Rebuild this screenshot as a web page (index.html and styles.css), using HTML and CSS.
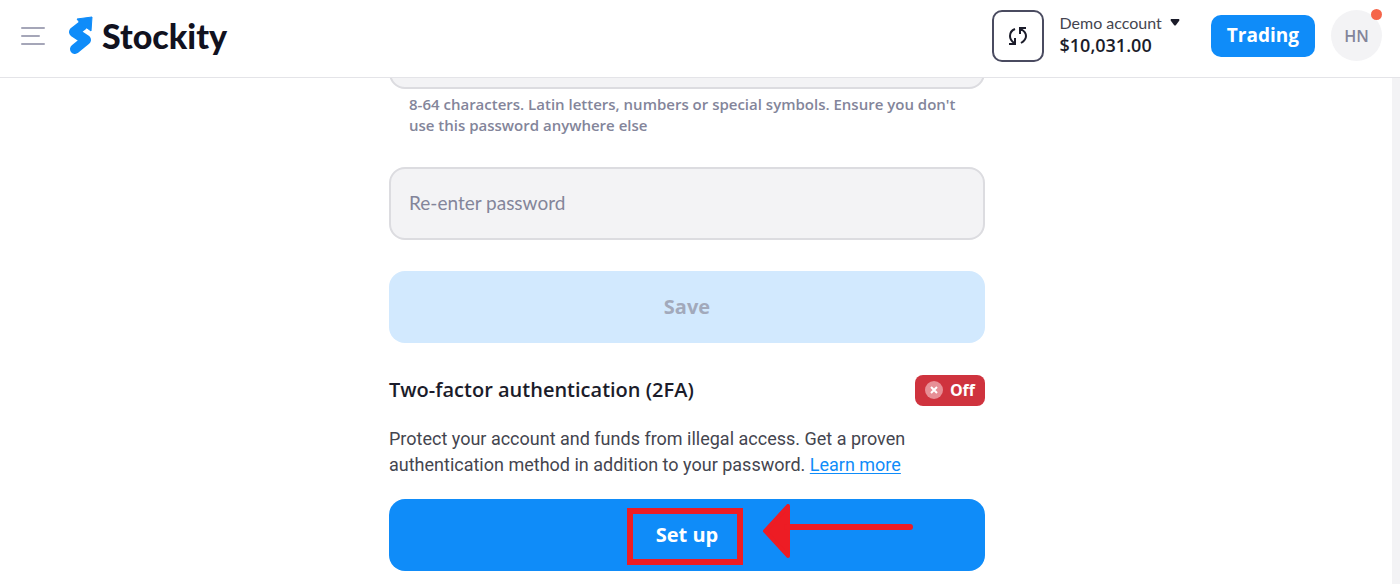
FILE: index.html
```html
<!DOCTYPE html>
<html lang="en">
<head>
	<meta charset="UTF-8">
	<meta name="viewport" content="width=device-width, initial-scale=1">
	<title>Stockity</title>
	<link rel="stylesheet" href="styles.css">
</head>
<body>
	<header class="header">
		<button class="menu" type="button" aria-label="Menu">
			<svg width="24" height="20" viewBox="0 0 24 20" fill="none" stroke="#a5a6b8" stroke-width="2" stroke-linecap="round">
				<path d="M1 2h22M1 10h17M1 18h22"/>
			</svg>
		</button>
		<a class="logo" href="#">
			<svg width="24" height="40" viewBox="0 0 24 40" aria-hidden="true">
				<path d="M6 33L17 24L5 16L14 9" fill="none" stroke="#0f8cf9" stroke-width="10" stroke-linecap="round" stroke-linejoin="round"/>
				<path d="M23 1L8 3L11 7L18 12L22 15Z" fill="#0f8cf9" stroke="#0f8cf9" stroke-linejoin="round"/>
			</svg>
			<span>Stockity</span>
		</a>
		<div class="account">
			<button class="refresh" type="button" aria-label="Refresh balance">
				<svg width="20" height="20" viewBox="0 0 20 20" fill="none" stroke="#1b1c2a" stroke-width="2">
					<path d="M7 3Q2 5 2 10Q2 14 6 17M1 18H7V12M13 17Q18 14 18 10Q18 6 13 3M18 2H12V8"/>
				</svg>
			</button>
			<button class="balance" type="button">
				<span class="balance-type">Demo account
					<svg width="10" height="7" viewBox="0 0 10 7" aria-hidden="true"><path fill="#1b1c2a" d="M1 0H9Q10 1 9 2L6 6Q5 7 4 6L1 2Q0 1 1 0Z"/></svg>
				</span>
				<span class="balance-sum">$10,031.00</span>
			</button>
		</div>
		<button class="trading" type="button">Trading</button>
		<button class="avatar" type="button">HN<i class="dot"></i></button>
	</header>

	<main class="page">
		<section class="content">
			<form class="form">
				<input class="field field-new" id="password" type="password" aria-label="New password" aria-describedby="hint">
				<p class="hint" id="hint">8-64 characters. Latin letters, numbers or special symbols. Ensure you don't use this password anywhere else</p>
				<input class="field" id="repeat" type="password" placeholder="Re-enter password" aria-label="Re-enter password">
				<button class="btn btn-save" type="submit" disabled>Save</button>
			</form>

			<div class="title">
				<h2>Two-factor authentication (2FA)</h2>
				<span class="badge">
					<svg width="18" height="18" viewBox="0 0 18 18" aria-hidden="true">
						<circle cx="9" cy="9" r="9" fill="#e78f96"/>
						<path d="M6 6l6 6M12 6l-6 6" stroke="#fff" stroke-width="2"/>
					</svg>
					Off
				</span>
			</div>
			<p class="text">Protect your account and funds from illegal access. Get a proven authentication method in addition to your password. <a href="#">Learn more</a></p>
			<div class="setup">
				<button class="btn btn-setup" type="button">Set up</button>
				<div class="frame"></div>
				<svg class="arrow" width="152" height="54" viewBox="0 0 152 54" aria-hidden="true">
					<path d="M2 27L25 2V52Z" fill="#ed1c24" stroke="#ed1c24" stroke-width="4" stroke-linejoin="round"/>
					<path d="M24 23H147" stroke="#ed1c24" stroke-width="6" stroke-linecap="round"/>
				</svg>
			</div>
		</section>
	</main>
</body>
</html>
```

FILE: styles.css
```css
* {
	box-sizing: border-box;
}

body {
	margin: 0;
	background: #fff;
	color: #1b1c2a;
	font-family: "Open Sans", sans-serif;
	font-size: 18px;
}

button {
	border: 0;
	padding: 0;
	background: none;
	color: inherit;
	font-family: inherit;
}

/* header */
.header {
	position: sticky;
	top: 0;
	z-index: 1;
	display: flex;
	align-items: center;
	height: 78px;
	padding: 0 18px 6px 21px;
	background: #fff;
	border-bottom: 1px solid #e4e4e8;
}
.menu {
	display: flex;
}
.logo {
	display: flex;
	align-items: center;
	gap: 9px;
	margin: 0 auto 0 24px;
	color: #11121f;
	font-family: Lato, sans-serif;
	font-size: 34px;
	font-weight: 900;
	line-height: 40px;
	text-decoration: none;
}
.account {
	display: flex;
	align-items: center;
	gap: 16px;
}
.refresh {
	display: flex;
	align-items: center;
	justify-content: center;
	width: 52px;
	height: 52px;
	border: 2px solid #4a4b60;
	border-radius: 10px;
}
.balance {
	display: flex;
	flex-direction: column;
	padding-bottom: 4px;
	text-align: left;
	white-space: nowrap;
}
.balance-type {
	display: flex;
	align-items: center;
	gap: 8px;
	color: #44454f;
	font-family: Lato, sans-serif;
	font-size: 16px;
	line-height: 22px;
}
.balance-sum {
	font-size: 18px;
	font-weight: 600;
	line-height: 22px;
}
.trading {
	height: 42px;
	margin: 0 16px 0 31px;
	padding: 0 16px 1px;
	border-radius: 10px;
	background: #0f8cf9;
	color: #fff;
	font-size: 19px;
	font-weight: 700;
}
.avatar {
	position: relative;
	width: 51px;
	height: 51px;
	border-radius: 50%;
	background: #f3f3f5;
	color: #83859a;
	font-size: 16px;
	font-weight: 600;
}
.dot {
	position: absolute;
	top: -1px;
	right: 0;
	width: 11px;
	height: 11px;
	border-radius: 50%;
	background: #f5654a;
}

/* page */
.page {
	padding: 0 18px 13px 0;
	border-right: 8px solid #f3f3f5;
}
.content {
	max-width: 596px;
	margin: 0 auto;
}
.form {
	display: flex;
	flex-direction: column;
}
.field {
	width: 100%;
	height: 73px;
	padding: 0 18px 2px;
	border: 2px solid #dcdce0;
	border-radius: 16px;
	background: #f3f3f5;
	font-family: Lato, sans-serif;
	font-size: 19px;
}
.field::placeholder {
	color: #83859a;
	opacity: 1;
}
/* scrolled under the header */
.field-new {
	margin-top: -62px;
}
.hint {
	margin: 5px 20px 31px;
	color: #83859a;
	font-size: 15px;
	font-weight: 600;
	line-height: 21px;
}
.btn {
	width: 100%;
	height: 72px;
	padding-bottom: 2px;
	border-radius: 16px;
	font-size: 20px;
	font-weight: 700;
}
.btn-save {
	margin-top: 31px;
	background: #d2e9fe;
	color: #a2a9bb;
}
.title {
	display: flex;
	align-items: center;
	justify-content: space-between;
	margin: 32px 0 20px;
}
.title h2 {
	margin: 0;
	padding-bottom: 2px;
	font-size: 20px;
	font-weight: 600;
	line-height: 28px;
}
.badge {
	display: flex;
	align-items: center;
	gap: 7px;
	height: 31px;
	padding: 0 10px 1px;
	border-radius: 8px;
	background: #cf333e;
	color: #fff;
	font-size: 16px;
	font-weight: 700;
}
.text {
	margin: 0 0 21px;
	color: #44454f;
	font-family: Roboto, sans-serif;
	line-height: 26px;
}
.text a {
	color: #0f8cf9;
	text-underline-offset: 2px;
}
.setup {
	position: relative;
}
.btn-setup {
	display: block;
	background: #0f8cf9;
	color: #fff;
}
/* marks drawn over the button */
.frame {
	position: absolute;
	top: 9px;
	left: calc(50% - 60px);
	width: 116px;
	height: 57px;
	border: 6px solid #ed1c24;
	pointer-events: none;
}
.arrow {
	position: absolute;
	top: 5px;
	left: calc(50% + 76px);
	pointer-events: none;
}
```
